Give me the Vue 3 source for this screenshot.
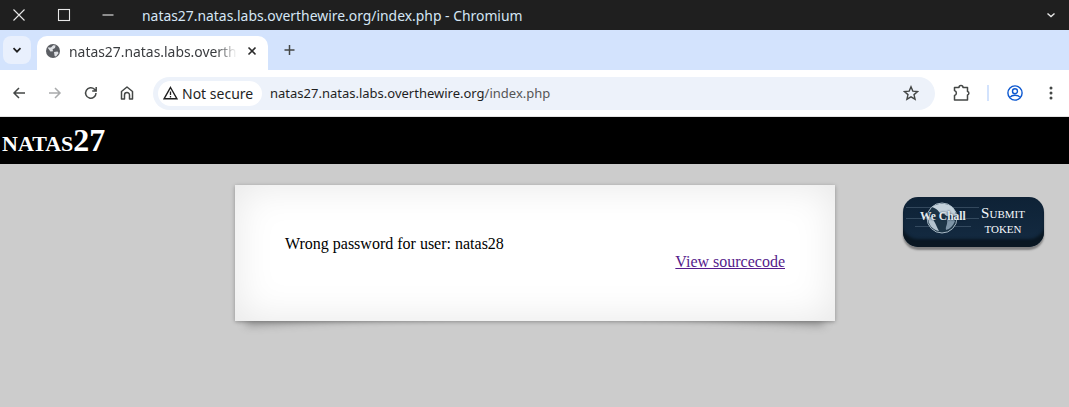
<script setup>
</script>

<template>
  <div class="page">
    <div class="titlebar">
      <div class="winbtns">
        <svg width="16" height="16" viewBox="0 0 16 16"><path d="M2.5 2.5 L13.5 13.5 M13.5 2.5 L2.5 13.5" stroke="#e8e8e8" stroke-width="1.1" fill="none"/></svg>
        <svg width="16" height="16" viewBox="0 0 16 16"><rect x="2.5" y="2.5" width="11" height="11" stroke="#e8e8e8" stroke-width="1.1" fill="none"/></svg>
        <svg width="16" height="16" viewBox="0 0 16 16"><path d="M2.5 8 H13.5" stroke="#e8e8e8" stroke-width="1.1" fill="none"/></svg>
      </div>
      <div class="wintitle">natas27.natas.labs.overthewire.org/index.php - Chromium</div>
      <svg class="winchev" width="12" height="12" viewBox="0 0 12 12"><path d="M2.5 4.5 L6 7.5 L9.5 4.5" stroke="#e8e8e8" stroke-width="1.4" fill="none"/></svg>
    </div>

    <div class="tabstrip">
      <div class="tabsearch">
        <svg width="12" height="12" viewBox="0 0 12 12"><path d="M2.5 4.2 L6 7.7 L9.5 4.2" stroke="#1f1f1f" stroke-width="1.7" fill="none"/></svg>
      </div>
      <div class="tab">
        <svg class="globe" width="14" height="14" viewBox="0 0 14 14">
          <circle cx="7" cy="7" r="7" fill="#5b5e63"/>
          <path d="M1.6 3.4 L5 3.4 L7.2 1.2 L9.6 1.6 L9 4 L6.6 5.2 L7 7.2 L4.4 7.6 L3 5.6 Z M8 8 L11.5 7.4 L12.6 9 L10 12.4 L8.6 12 Z" fill="#dfe1e5"/>
        </svg>
        <span class="tabtitle">natas27.natas.labs.overthewire.org/index.php</span>
        <svg class="tabclose" width="10" height="10" viewBox="0 0 10 10"><path d="M1.5 1.5 L8.5 8.5 M8.5 1.5 L1.5 8.5" stroke="#2b2b2b" stroke-width="1.6" fill="none"/></svg>
      </div>
      <svg class="newtab" width="11" height="12" viewBox="0 0 11 12"><path d="M5.5 1 V11 M0.5 6 H10.5" stroke="#444746" stroke-width="1.5" fill="none"/></svg>
    </div>

    <div class="toolbar">
      <div class="navs">
        <svg width="16" height="16" viewBox="0 0 16 16"><path d="M14 8 H3 M8 3 L3 8 L8 13" stroke="#444746" stroke-width="1.5" fill="none"/></svg>
        <svg width="16" height="16" viewBox="0 0 16 16"><path d="M2 8 H13 M8 3 L13 8 L8 13" stroke="#a9abac" stroke-width="1.5" fill="none"/></svg>
        <svg width="16" height="16" viewBox="0 0 16 16"><path d="M13 8 A5.2 5.2 0 1 1 11.5 4.3 L13 5.8 M13.2 2 V6 H9.2" stroke="#444746" stroke-width="1.5" fill="none"/></svg>
        <svg width="16" height="16" viewBox="0 0 16 16"><path d="M2.5 14 V6.5 L8 2 L13.5 6.5 V14 H10.5 V10 A2.5 2.5 0 0 0 5.5 10 V14 Z" stroke="#444746" stroke-width="1.5" fill="none" stroke-linejoin="round"/></svg>
      </div>
      <div class="omnibox">
        <div class="chip">
          <svg width="15" height="14" viewBox="0 0 15 14"><path d="M7.5 1.5 L14 12.8 H1 Z" stroke="#1f1f1f" stroke-width="1.4" fill="none"/><path d="M7.5 5.5 V9 M7.5 10 V11.5" stroke="#1f1f1f" stroke-width="1.3"/></svg>
          <span>Not secure</span>
        </div>
        <div class="url"><span class="host">natas27.natas.labs.overthewire.org</span><span class="path">/index.php</span></div>
        <svg class="star" width="16" height="16" viewBox="0 0 16 16"><path d="M8 1.8 L9.8 6.1 L14.6 6.5 L11 9.6 L12.1 14.2 L8 11.8 L3.9 14.2 L5 9.6 L1.4 6.5 L6.2 6.1 Z" stroke="#444746" stroke-width="1.4" fill="none"/></svg>
      </div>
      <div class="actions">
        <svg width="18" height="18" viewBox="0 0 18 18"><path d="M1.5 3.5 H6 A2 2 0 0 1 10 3.5 H14.5 V7.5 A1.8 1.8 0 0 1 14.5 11 V16 H1.5 V11.5 A2.6 2.6 0 0 0 1.5 6.5 Z" stroke="#444746" stroke-width="1.5" fill="none" stroke-linejoin="round"/></svg>
        <div class="sep"></div>
        <svg width="16" height="16" viewBox="0 0 16 16"><circle cx="8" cy="8" r="7.1" stroke="#0b57d0" stroke-width="1.4" fill="none"/><circle cx="8" cy="6.2" r="2.5" stroke="#0b57d0" stroke-width="1.4" fill="none"/><path d="M3.2 12.2 C5 9.6 11 9.6 12.8 12.2" stroke="#0b57d0" stroke-width="1.4" fill="none"/></svg>
        <svg class="dots" width="4" height="16" viewBox="0 0 4 16"><circle cx="2" cy="3" r="1.5" fill="#444746"/><circle cx="2" cy="8" r="1.5" fill="#444746"/><circle cx="2" cy="13" r="1.5" fill="#444746"/></svg>
      </div>
    </div>

    <div class="site">
      <h1 class="sitehead">natas27</h1>
      <div class="content">
        <div class="body">Wrong password for user: natas28</div>
        <div class="viewsource"><a href="#" @click.prevent>View sourcecode</a></div>
      </div>
      <div class="wechall">
        <div class="wclogo">
          <svg width="78" height="42" viewBox="0 0 78 42">
            <path d="M3 10.5 H76 M3 21.5 H76 M12 29.5 H68" stroke="#8fa6ba" stroke-width="1" opacity=".28"/>
            <circle cx="39" cy="21" r="15" fill="#1d3547" stroke="#a9bac6" stroke-width="1"/>
            <path d="M29 10 C33 6.5 43 5 49 10 C52 13 53 16 53 19 C49 19 47 17 45 19 C43 20 42 16 39 17 C36 17 36 12 29 10 Z" fill="#c3d1db"/>
            <path d="M25 20 C27 19 30 21 31 24 C33 27 34 31 36 34 C30 33 25 28 25 20 Z" fill="#b5c5d1"/>
            <path d="M44 23 C47 22 51 22 52 24 C50 29 47 32 43 33 C42 30 45 27 44 23 Z" fill="#7e95a7"/>
          </svg>
          <span class="wctext">We Chall</span>
        </div>
        <div class="wcsubmit"><span class="s1">Submit</span><span class="s2">token</span></div>
      </div>
    </div>
  </div>
</template>

<style scoped>
.page {
  width: 1069px;
  height: 407px;
  overflow: hidden;
  display: flex;
  flex-direction: column;
  position: relative;
  background: #ccc;
}
.titlebar {
  height: 30px;
  flex: none;
  background: #1f1f1f;
  display: flex;
  align-items: center;
  color: #e8eaed;
}
.winbtns {
  display: flex;
  gap: 28.5px;
  padding-left: 11px;
  width: 142px;
  box-sizing: border-box;
}
.wintitle {
  flex: 1;
  font: 13.9px "Noto Sans", sans-serif;
  color: #d5e6f5;
}
.winchev { margin-right: 12px; }
.tabstrip {
  height: 40px;
  flex: none;
  background: #d3e3fd;
  display: flex;
  align-items: flex-end;
  position: relative;
}
.tabsearch {
  width: 28px;
  height: 28px;
  margin: 0 0 6px 3px;
  border-radius: 8px;
  background: #e9f0fd;
  display: flex;
  align-items: center;
  justify-content: center;
}
.tab {
  width: 231px;
  height: 34px;
  margin-left: 6px;
  background: #fff;
  border-radius: 10px 10px 0 0;
  display: flex;
  align-items: center;
  box-sizing: border-box;
  padding: 0 11px 4px 9px;
}
.globe { flex: none; }
.tabtitle {
  flex: 1;
  min-width: 0;
  margin: 0 10px 0 9px;
  font: 13.9px "Noto Sans", sans-serif;
  color: #3a3c3f;
  white-space: nowrap;
  overflow: hidden;
  -webkit-mask-image: linear-gradient(90deg, #000 88%, transparent);
  mask-image: linear-gradient(90deg, #000 88%, transparent);
}
.tabclose { flex: none; }
.newtab { margin: 0 0 14px 16px; }
.toolbar {
  height: 46px;
  flex: none;
  background: #fff;
  border-bottom: 1px solid #e3e3e3;
  display: flex;
  align-items: center;
}
.navs {
  display: flex;
  gap: 20px;
  padding-left: 11px;
  width: 153px;
  box-sizing: border-box;
}
.omnibox {
  width: 782px;
  height: 33px;
  border-radius: 17px;
  background: #edf2fa;
  display: flex;
  align-items: center;
  box-sizing: border-box;
  padding: 0 16px 0 5px;
}
.chip {
  height: 25px;
  padding: 0 7px 0 5px;
  width: 104px;
  box-sizing: border-box;
  border-radius: 13px;
  background: #fff;
  display: flex;
  align-items: center;
  gap: 4px;
  font: 14px "Noto Sans", sans-serif;
  color: #1f1f1f;
  white-space: nowrap;
}
.url {
  flex: 1;
  margin-left: 8px;
  font: 13px "Noto Sans", sans-serif;
  white-space: nowrap;
}
.host { color: #1f1f1f; }
.path { color: #555; }
.actions {
  display: flex;
  align-items: center;
  padding-left: 18px;
}
.sep {
  width: 2px;
  height: 16px;
  background: #d3e3fd;
  margin: 0 18px 0 16px;
}
.dots { margin-left: 26px; }
.site {
  flex: 1;
  position: relative;
  z-index: 0;
  background: #ccc;
}
.sitehead {
  margin: 0;
  height: 47px;
  background: #000;
  color: #fff;
  font: bold 32px/47px "Liberation Serif", serif;
  font-variant: small-caps;
  padding-left: 2px;
}
.content {
  width: 600px;
  height: 136px;
  margin: 21px auto 0;
  position: relative;
  left: 0.5px;
  background: #fff;
  box-shadow: inset 0 0 40px rgba(0,0,0,.1), 0 1px 4px rgba(0,0,0,.3);
  box-sizing: border-box;
  padding: 50px 50px 0;
  font: 16px/18px "Liberation Serif", serif;
  color: #000;
}
.content::before,
.content::after {
  content: "";
  position: absolute;
  z-index: -1;
  top: 80%;
  bottom: 20px;
  width: 50%;
  background: #888;
  box-shadow: 0 15px 10px #888;
}
.content::before { left: 10px; transform: rotate(-3.5deg); }
.content::after { right: 10px; transform: rotate(3.5deg); }
.viewsource {
  text-align: right;
}
.viewsource a { color: #551a8b; text-decoration: underline; }
.wechall {
  position: absolute;
  left: 903px;
  top: 80px;
  width: 141px;
  height: 50px;
  border-radius: 15px;
  background: linear-gradient(180deg, #0e2236, #142b42);
  box-shadow: inset 0 -9px 3px -1px #0a1722, 0 3px 2px #808080;
  display: flex;
  align-items: center;
}
.wclogo {
  width: 78px;
  height: 42px;
  margin-top: -8px;
  position: relative;
  flex: none;
}
.wclogo svg { display: block; }
.wctext {
  position: absolute;
  left: 17px;
  top: 13px;
  font: bold 11.5px "Liberation Serif", serif;
  color: #e4ebf0;
  text-shadow: 0 0 2px #0e2236;
  white-space: nowrap;
}
.wcsubmit {
  flex: 1;
  display: flex;
  flex-direction: column;
  align-items: center;
  margin-top: -3px;
  font-family: "Liberation Serif", serif;
  color: #f6f9fc;
  font-variant: small-caps;
  padding-right: 19px;
}
.s1 { font-size: 15px; line-height: 15px; }
.s2 { font-size: 16px; line-height: 14px; }
</style>
